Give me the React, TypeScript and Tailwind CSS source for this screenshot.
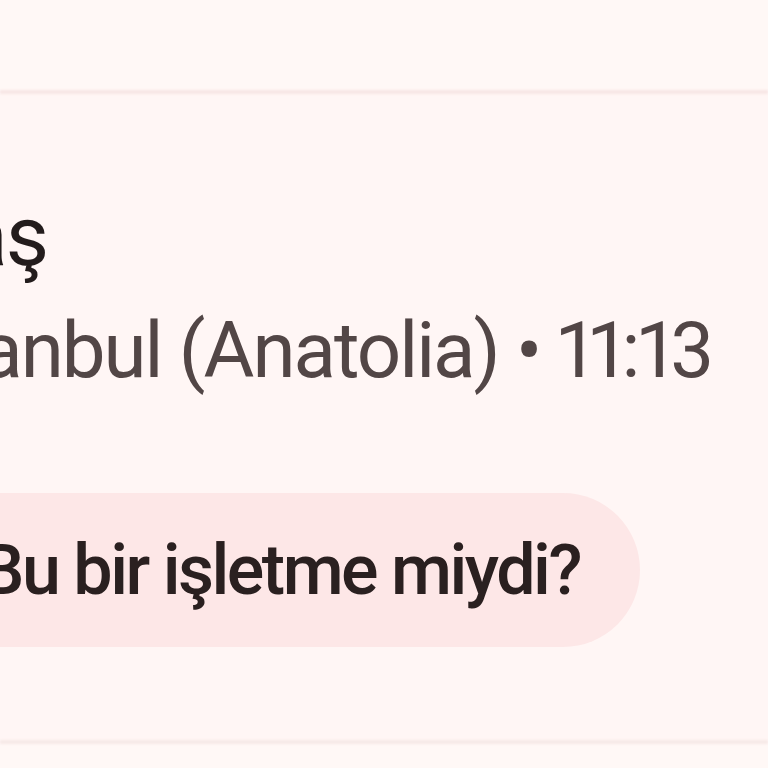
export default function App() {
  return (
    <div
      className="w-[768px] h-[768px] overflow-hidden bg-[#fff8f6] flex flex-col text-[#1f1a1a]"
      style={{ fontFamily: "Roboto, 'Noto Sans', sans-serif" }}
    >
      {/* top bar */}
      <div className="h-[90px] shrink-0 bg-[#fff8f6]" />
      <div className="h-[4px] shrink-0 bg-[#f8e6e5] blur-[1px]" />

      {/* call log entry */}
      <div className="h-[646px] shrink-0 bg-[#fff6f5] flex flex-col">
        <div className="flex justify-end w-[47px] mt-[100px]">
          <span className="whitespace-nowrap text-[84px] leading-[86px] tracking-[-2px] text-[#231c1c]">
            Barış Ataş
          </span>
        </div>
        <div className="flex justify-end w-[712px] mt-[28px]">
          <span className="whitespace-nowrap text-[78px] leading-[86px] tracking-[-2px] proportional-nums text-[#524646]">
            İstanbul (Anatolia) • 11:13
          </span>
        </div>
        <div className="flex mt-[99px]">
          <div className="h-[154px] w-[640px] rounded-r-full bg-[#fde7e7] flex items-center justify-end pr-[60px]">
            <span className="whitespace-nowrap text-[70px] font-medium tracking-[-2.5px] text-[#2a2020]">
              Bu bir işletme miydi?
            </span>
          </div>
        </div>
      </div>

      <div className="h-[4px] shrink-0 bg-[#f7e9e7] blur-[1px]" />
      <div className="flex-1 bg-[#fff8f6]" />
    </div>
  );
}
